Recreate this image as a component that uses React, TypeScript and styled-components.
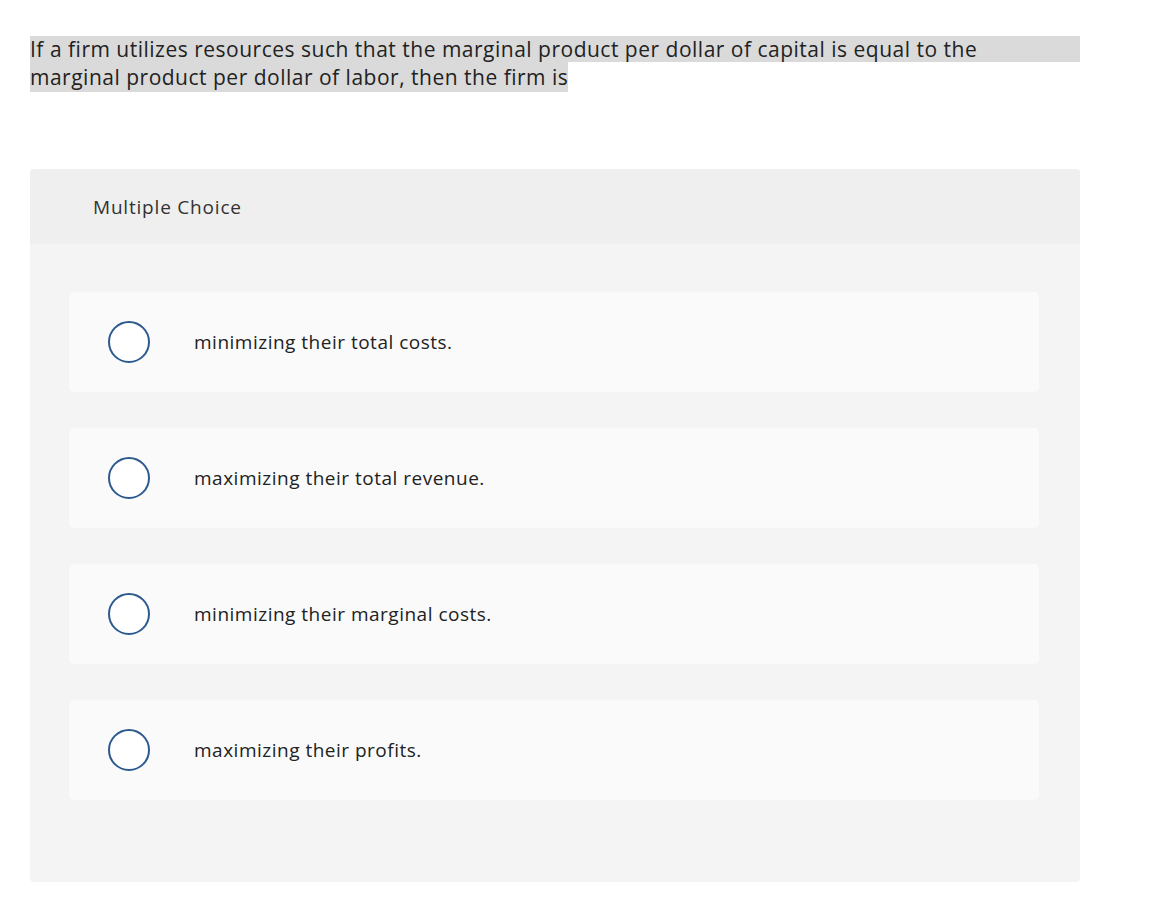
import styled, { createGlobalStyle } from "styled-components";

const GlobalStyle = createGlobalStyle`
  body {
    margin: 0;
    background: #ffffff;
    font-family: "Open Sans", "Liberation Sans", sans-serif;
  }
`;

const options = [
  "minimizing their total costs.",
  "maximizing their total revenue.",
  "minimizing their marginal costs.",
  "maximizing their profits.",
];

export default function App() {
  return (
    <>
      <GlobalStyle />
      <Page>
        <Question>
          <FullLine>
            If a firm utilizes resources such that the marginal product per dollar of capital is equal to the
          </FullLine>
          <PartLine>marginal product per dollar of labor, then the firm is</PartLine>
        </Question>
        <Card>
          <Header>Multiple Choice</Header>
          <Body>
            {options.map((o) => (
              <Option key={o}>
                <Radio />
                <OptionText>{o}</OptionText>
              </Option>
            ))}
          </Body>
        </Card>
      </Page>
    </>
  );
}

const Page = styled.div`
  padding: 36px 30px 40px 30px;
  width: 1050px;
`;

// 질문 텍스트 (선택 영역처럼 회색 배경)
const Question = styled.div`
  font-size: 21px;
  letter-spacing: 0.5px;
  color: #222222;
`;

const FullLine = styled.div`
  background: #dadada;
  height: 26px;
  line-height: 26px;
  white-space: nowrap;
`;

const PartLine = styled.span`
  display: inline-block;
  background: #dadada;
  height: 30px;
  line-height: 30px;
`;

const Card = styled.div`
  margin-top: 77px;
  background: #f4f4f4;
  border-radius: 4px;
  overflow: hidden;
`;

const Header = styled.div`
  height: 75px;
  display: flex;
  align-items: center;
  padding-left: 63px;
  background: #efefef;
  font-size: 19px;
  letter-spacing: 0.8px;
  color: #333333;
`;

const Body = styled.div`
  display: flex;
  flex-direction: column;
  gap: 36px;
  padding: 48px 41px 82px 39px;
`;

const Option = styled.div`
  height: 100px;
  display: flex;
  align-items: center;
  padding-left: 39px;
  background: #fafafa;
  border-radius: 5px;
`;

const Radio = styled.div`
  width: 38px;
  height: 38px;
  border: 2px solid #2c5a8f;
  border-radius: 50%;
  background: #ffffff;
  flex-shrink: 0;
`;

const OptionText = styled.div`
  margin-left: 44px;
  font-size: 19px;
  letter-spacing: 0.5px;
  color: #222222;
`;
